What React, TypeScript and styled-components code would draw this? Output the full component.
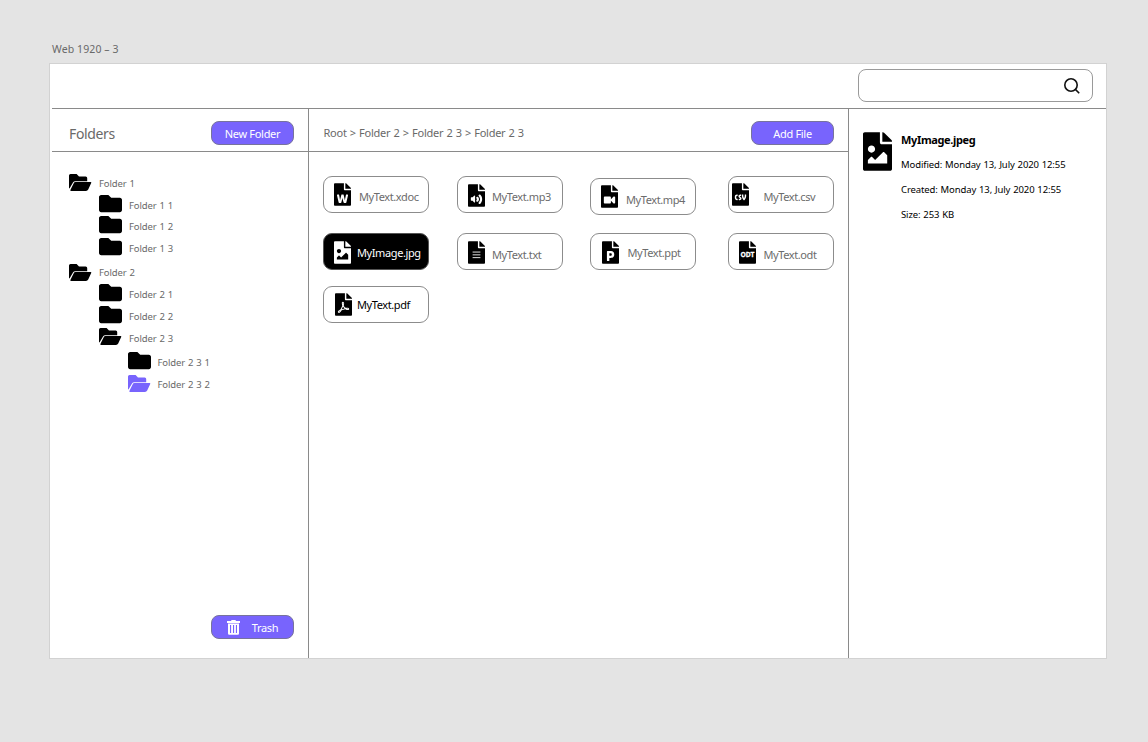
import React from 'react';
import styled, { createGlobalStyle } from 'styled-components';
import {
  FaFileAudio,
  FaFileCsv,
  FaFileImage,
  FaFilePdf,
  FaFilePowerpoint,
  FaFileVideo,
  FaFileWord,
  FaFolder,
} from 'react-icons/fa';

const GlobalStyle = createGlobalStyle`
  * { box-sizing: border-box; }
  body {
    margin: 0;
    background: #e4e4e4;
    font-family: "Noto Sans", "Open Sans", sans-serif;
    color: #696969;
  }
  svg { display: block; }
`;

const accent = '#7864fd';
const line = '#8a8a8a';

const Canvas = styled.div`
  width: 1148px;
  height: 742px;
  padding: 41px 0 0 49px;
  overflow: hidden;
`;

const FrameName = styled.div`
  height: 22px;
  padding-left: 3px;
  font-size: 10.5px;
  line-height: 16px;
  letter-spacing: 0.1px;
`;

const Frame = styled.main`
  width: 1058px;
  height: 596px;
  border: 1px solid #d2d2d2;
  background: #fff;
  padding: 0 0 0 2px;
  display: flex;
  flex-direction: column;
`;

const TopBar = styled.header`
  height: 45px;
  flex: none;
  border-bottom: 1px solid ${line};
  display: flex;
  justify-content: flex-end;
  padding: 5px 13px 0 0;
`;

const SearchBox = styled.div`
  width: 235px;
  height: 33px;
  border: 1px solid #9a9a9a;
  border-radius: 8px;
  display: flex;
  justify-content: flex-end;
  padding: 7px 11px 0 0;
`;

const Columns = styled.div`
  flex: 1;
  display: grid;
  grid-template-columns: 257px 540px 1fr;
`;

const Panel = styled.section`
  border-right: 1px solid ${line};
  display: flex;
  flex-direction: column;
`;

const PanelHead = styled.div<{ $left: number }>`
  height: 43px;
  flex: none;
  border-bottom: 1px solid ${line};
  display: flex;
  justify-content: space-between;
  align-items: flex-start;
  padding: 12px 14px 0 ${(p) => p.$left}px;
`;

const Title = styled.h1`
  margin: 3px 0 0;
  font-size: 14px;
  font-weight: 400;
  line-height: 20px;
  letter-spacing: -0.35px;
`;

const Crumbs = styled.nav`
  margin-top: 4px;
  font-size: 11px;
  line-height: 16px;
  letter-spacing: -0.25px;
  word-spacing: 0.6px;
  white-space: nowrap;
`;

const Button = styled.button`
  width: 83px;
  height: 24px;
  flex: none;
  border: 1px solid #77739c;
  border-radius: 8px;
  background: ${accent};
  color: #fff;
  font: inherit;
  font-size: 11px;
  letter-spacing: -0.3px;
  line-height: 16px;
  padding: 1px 0 0;
  display: flex;
  align-items: center;
  justify-content: center;
  gap: 12px;
`;

const Tree = styled.div`
  flex: 1;
  padding: 22px 0 0 17px;
`;

const Node = styled.div<{ $indent: number; $height: number }>`
  height: ${(p) => p.$height}px;
  padding-left: ${(p) => p.$indent}px;
  display: flex;
  align-items: flex-start;
`;

const NodeIcon = styled.span<{ $active?: boolean }>`
  width: 23px;
  height: 17px;
  display: flex;
  align-items: center;
  color: ${(p) => (p.$active ? accent : '#000')};
  svg { width: 23px; height: 23px; flex: none; }
`;

const NodeLabel = styled.span<{ $drop: number }>`
  margin: ${(p) => p.$drop + 1}px 0 0 7px;
  font-size: 9.5px;
  line-height: 14px;
  letter-spacing: -0.1px;
  word-spacing: 0.5px;
  white-space: nowrap;
`;

const TrashRow = styled.div`
  display: flex;
  justify-content: flex-end;
  padding: 0 14px 19px 0;
`;

const Files = styled.div`
  display: grid;
  grid-template-columns: 134px 133px 138px 106px;
  grid-template-rows: 57px 53px 37px;
  padding: 24px 0 0 14px;
`;

const Card = styled.div<{ $selected?: boolean; $drop: number; $left: number }>`
  width: 106px;
  height: 37px;
  margin-top: ${(p) => p.$drop}px;
  border: 1px solid ${(p) => (p.$selected ? '#555' : '#8c8c8c')};
  border-radius: 9px;
  background: ${(p) => (p.$selected ? '#000' : '#fff')};
  color: ${(p) => (p.$selected ? '#fff' : '#000')};
  padding-left: ${(p) => p.$left}px;
  display: flex;
  align-items: flex-start;
`;

const FileIcon = styled.span<{ $drop: number }>`
  width: 17px;
  height: 23px;
  margin-top: ${(p) => p.$drop}px;
  flex: none;
  svg { width: 17px; height: 23px; }
`;

const FileName = styled.span<{ $gap: number; $drop: number; $tone: string }>`
  margin: ${(p) => p.$drop}px 0 0 ${(p) => p.$gap}px;
  color: ${(p) => p.$tone};
  font-size: 11px;
  line-height: 16px;
  letter-spacing: -0.4px;
  white-space: nowrap;
`;

const Details = styled.aside`
  display: flex;
  align-items: flex-start;
  padding: 23px 0 0 14px;
  color: #000;
  svg { width: 29px; height: 39px; flex: none; }
`;

const Info = styled.div`
  margin-left: 9px;
  display: flex;
  flex-direction: column;
`;

const InfoTitle = styled.h2`
  margin: 0 0 10px;
  font-size: 11px;
  font-weight: 700;
  line-height: 16px;
  letter-spacing: -0.35px;
`;

const InfoLine = styled.p`
  margin: 0;
  height: 25px;
  font-size: 9.5px;
  line-height: 14px;
  letter-spacing: -0.11px;
  word-spacing: 0.5px;
  white-space: nowrap;
`;

const SearchIcon = () => (
  <svg width="18" height="18" viewBox="0 0 18 18" fill="none" stroke="#111" strokeWidth="1.6">
    <circle cx="8" cy="8" r="6.2" />
    <path d="M12.4 12.4L16.2 16.2" />
  </svg>
);

const TrashIcon = () => (
  <svg width="13" height="15" viewBox="0 0 13 15" fill="#fff">
    <path d="M4.3 0h4.4v1H13v2H0V1h4.3z" />
    <path
      fillRule="evenodd"
      d="M1 3.6h11V13.6q0 1.2-1.2 1.2H2.2Q1 14.8 1 13.6zM3 5v8h1.1V5zM6 5v8h1.1V5zM8.9 5v8H10V5z"
    />
  </svg>
);

const FolderOpenIcon = () => (
  <svg viewBox="0 0 23 23" fill="currentColor">
    <path d="M0 4.500Q0 3 1.500 3H7.600L10 5.400H16.700Q18.200 5.400 18.200 6.900V10.200H6.300Q4.800 10.200 4 11.400L0.500 17.600Q0 17.600 0 16.800z" />
    <path d="M6.500 11.100H21.600Q22.700 11.100 22.200 12.100L19.200 18.600Q18.500 20 17 20H2.200Q0.800 20 1.500 18.700L4.600 12.400Q5.200 11.100 6.500 11.100z" />
  </svg>
);

const page =
  'M224 136V0H24C10.700 0 0 10.700 0 24v464c0 13.300 10.700 24 24 24h336c13.300 0 24-10.700 24-24V160H248c-13.200 0-24-10.800-24-24zM384 122v6H256V0h6.100c6.400 0 12.500 2.500 17 7l97.900 98c4.500 4.500 7 10.600 7 17z';

const TxtIcon = () => (
  <svg viewBox="0 0 384 512">
    <path fill="currentColor" d={page} />
    <path stroke="#fff" strokeWidth="20" d="M104 246H280M104 309H280M104 372H280" />
  </svg>
);

const OdtIcon = () => (
  <svg viewBox="0 0 384 512">
    <path fill="currentColor" d={page} />
    <text
      x="192"
      y="368"
      textAnchor="middle"
      fontSize="172"
      fontWeight="700"
      fill="#fff"
      stroke="#fff"
      strokeWidth="6"
      textLength="316"
      lengthAdjust="spacingAndGlyphs"
    >
      ODT
    </text>
  </svg>
);

const folders = [
  { name: 'Folder 1', indent: 0, open: true, height: 21, drop: 2 },
  { name: 'Folder 1 1', indent: 30, height: 21, drop: 3 },
  { name: 'Folder 1 2', indent: 30, height: 22, drop: 3 },
  { name: 'Folder 1 3', indent: 30, height: 26, drop: 3 },
  { name: 'Folder 2', indent: 0, open: true, height: 20, drop: 1 },
  { name: 'Folder 2 1', indent: 30, height: 22, drop: 3 },
  { name: 'Folder 2 2', indent: 30, height: 22, drop: 3 },
  { name: 'Folder 2 3', indent: 30, open: true, height: 24, drop: 3 },
  { name: 'Folder 2 3 1', indent: 58.5, height: 23, drop: 3 },
  { name: 'Folder 2 3 2', indent: 58.5, open: true, active: true, height: 22, drop: 2 },
];

const gray = '#6c6c6c';
const files = [
  { name: 'MyText.xdoc', Icon: FaFileWord, left: 10, top: 6, gap: 8, text: 12, drop: 0, tone: gray },
  { name: 'MyText.mp3', Icon: FaFileAudio, left: 10, top: 7, gap: 7, text: 12, drop: 0, tone: gray },
  { name: 'MyText.mp4', Icon: FaFileVideo, left: 10, top: 6, gap: 8, text: 13, drop: 2, tone: gray },
  { name: 'MyText.csv', Icon: FaFileCsv, left: 3, top: 6, gap: 14.5, text: 12, drop: 0, tone: gray },
  { name: 'MyImage.jpg', Icon: FaFileImage, left: 10, top: 7, gap: 6, text: 11, drop: 0, tone: '#fff', selected: true },
  { name: 'MyText.txt', Icon: TxtIcon, left: 10, top: 7, gap: 7, text: 13, drop: 0, tone: gray },
  { name: 'MyText.ppt', Icon: FaFilePowerpoint, left: 11, top: 7, gap: 8.5, text: 11, drop: 0, tone: gray },
  { name: 'MyText.odt', Icon: OdtIcon, left: 10, top: 7, gap: 7.5, text: 13, drop: 0, tone: gray },
  { name: 'MyText.pdf', Icon: FaFilePdf, left: 10.5, top: 6, gap: 5.5, text: 10, drop: 0, tone: '#000' },
];

export default function App() {
  return (
    <Canvas>
      <GlobalStyle />
      <FrameName>Web 1920 – 3</FrameName>
      <Frame>
        <TopBar>
          <SearchBox>
            <SearchIcon />
          </SearchBox>
        </TopBar>
        <Columns>
          <Panel>
            <PanelHead $left={17}>
              <Title>Folders</Title>
              <Button>New Folder</Button>
            </PanelHead>
            <Tree>
              {folders.map((f) => (
                <Node key={f.name} $indent={f.indent} $height={f.height}>
                  <NodeIcon $active={f.active}>{f.open ? <FolderOpenIcon /> : <FaFolder />}</NodeIcon>
                  <NodeLabel $drop={f.drop}>{f.name}</NodeLabel>
                </Node>
              ))}
            </Tree>
            <TrashRow>
              <Button>
                <TrashIcon />
                Trash
              </Button>
            </TrashRow>
          </Panel>
          <Panel>
            <PanelHead $left={14.5}>
              <Crumbs>Root &gt; Folder 2 &gt; Folder 2 3 &gt; Folder 2 3</Crumbs>
              <Button>Add File</Button>
            </PanelHead>
            <Files>
              {files.map(({ name, Icon, left, top, gap, text, drop, tone, selected }) => (
                <Card key={name} $selected={selected} $drop={drop} $left={left}>
                  <FileIcon $drop={top}>
                    <Icon />
                  </FileIcon>
                  <FileName $gap={gap} $drop={text} $tone={tone}>
                    {name}
                  </FileName>
                </Card>
              ))}
            </Files>
          </Panel>
          <Details>
            <FaFileImage />
            <Info>
              <InfoTitle>MyImage.jpeg</InfoTitle>
              <InfoLine>Modified: Monday 13, July 2020 12:55</InfoLine>
              <InfoLine>Created: Monday 13, July 2020 12:55</InfoLine>
              <InfoLine>Size: 253 KB</InfoLine>
            </Info>
          </Details>
        </Columns>
      </Frame>
    </Canvas>
  );
}
